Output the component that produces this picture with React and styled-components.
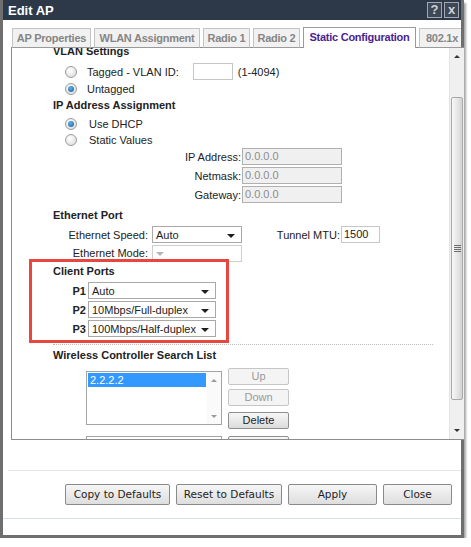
import React from "react";
import styled, { createGlobalStyle } from "styled-components";

const Global = createGlobalStyle`
  html, body { margin: 0; background: #fff; }
  body {
    font-family: "Liberation Sans", Arial, sans-serif;
    font-size: 11px;
    color: #222;
  }
  * { box-sizing: border-box; }
`;

const Window = styled.div`
  width: 464px;
  height: 538px;
  border: 3px solid #6f6f6f;
  border-top: 0;
  box-shadow: 2px 3px 2px rgba(0, 0, 0, 0.35);
  background: #fff;
  display: flex;
  flex-direction: column;
`;

const TitleBar = styled.div`
  height: 20px;
  background: #2d3949;
  display: flex;
  align-items: center;
  justify-content: space-between;
  padding: 0 2px 0 5px;
  flex-shrink: 0;
`;

const TitleText = styled.span`
  color: #fff;
  font-weight: bold;
  font-size: 13px;
`;

const TitleButtons = styled.div`
  display: flex;
  gap: 2px;
`;

const TitleButton = styled.div`
  width: 15px;
  height: 16px;
  border: 1px solid #a3a8ae;
  background: #3e4857;
  color: #cfd3d8;
  font-weight: bold;
  font-size: 13px;
  line-height: 14px;
  text-align: center;
`;

const Body = styled.div`
  padding: 7px 0 0 8px;
`;

const TabRow = styled.div`
  display: flex;
  gap: 3px;
  margin-left: 1px;
  height: 21px;
  overflow: hidden;
  position: relative;
  z-index: 1;
  margin-bottom: -1px;
  align-items: flex-end;
`;

const Tab = styled.div`
  flex-shrink: 0;
  width: ${(p) => p.$w}px;
  height: ${(p) => (p.$active ? 21 : 20)}px;
  border: 1px solid ${(p) => (p.$active ? "#9a9a9a" : "#c4c4c4")};
  border-bottom: ${(p) => (p.$active ? "0" : "1px solid #9a9a9a")};
  background: ${(p) => (p.$active ? "#fff" : "#f1f1f1")};
  color: ${(p) => (p.$active ? "#4b1e91" : "#858585")};
  font-weight: bold;
  letter-spacing: -0.25px;
  line-height: 19px;
  text-align: center;
  white-space: nowrap;
`;

const Panel = styled.div`
  width: 453px;
  height: 393px;
  border: 1px solid #8c8c8c;
  border-right: 0;
  display: flex;
  overflow: hidden;
`;

const Content = styled.div`
  flex: 1;
  overflow: hidden;
`;

const Inner = styled.div`
  margin-top: -5px;
`;

const Heading = styled.div`
  padding-left: 41px;
  height: 16px;
  line-height: 16px;
  font-weight: bold;
  margin-top: ${(p) => p.$mt || 0}px;
`;

const RadioRow = styled.div`
  display: flex;
  align-items: center;
  height: ${(p) => p.$h || 16}px;
  padding-left: 53px;
  margin-top: ${(p) => p.$mt || 0}px;
`;

const Radio = styled.span`
  width: 12px;
  height: 12px;
  border-radius: 50%;
  border: 1px solid #9c9c9c;
  background: radial-gradient(circle at 40% 35%, #ffffff, #d6d6d6);
  margin-right: ${(p) => p.$gap || 10}px;
  display: flex;
  align-items: center;
  justify-content: center;
  flex-shrink: 0;
  &::after {
    content: "";
    display: ${(p) => (p.$checked ? "block" : "none")};
    width: 6px;
    height: 6px;
    border-radius: 50%;
    background: radial-gradient(circle at 40% 35%, #5fb0ef, #1a5b98);
  }
`;

const Hint = styled.span`
  margin-left: 5px;
`;

const Row = styled.div`
  display: flex;
  align-items: center;
  height: ${(p) => p.$h || 19}px;
  margin-top: ${(p) => p.$mt || 0}px;
`;

const Label = styled.span`
  width: ${(p) => p.$w}px;
  text-align: right;
  padding-right: ${(p) => p.$pr || 1}px;
  font-weight: ${(p) => (p.$bold ? "bold" : "normal")};
  flex-shrink: 0;
  white-space: nowrap;
`;

const TextInput = styled.div`
  width: ${(p) => p.$w}px;
  height: 17px;
  border: 1px solid ${(p) => (p.$disabled ? "#b0b0b0" : "#c6c6c6")};
  background: ${(p) => (p.$disabled ? "#f0f0f0" : "#fff")};
  color: ${(p) => (p.$disabled ? "#8c8c8c" : "#222")};
  padding-left: 2px;
  line-height: 15px;
  margin-left: ${(p) => p.$ml || 0}px;
  flex-shrink: 0;
`;

const Select = styled.div`
  width: ${(p) => p.$w}px;
  height: 17px;
  border: 1px solid ${(p) => (p.$disabled ? "#cfcfcf" : "#a9a9a9")};
  background: #fff;
  display: flex;
  align-items: center;
  justify-content: space-between;
  padding: 0 6px 0 3px;
  flex-shrink: 0;
  &::after {
    content: "";
    border-left: 4px solid transparent;
    border-right: 4px solid transparent;
    border-top: 4px solid ${(p) => (p.$disabled ? "#b5b5b5" : "#1e1e1e")};
    margin-top: 2px;
  }
`;

const ClientSection = styled.div`
  position: relative;
`;

const RedBox = styled.div`
  position: absolute;
  left: 17px;
  top: -4px;
  width: 200px;
  height: 84px;
  border: 3px solid #e8473f;
  pointer-events: none;
`;

const Separator = styled.div`
  margin: 6px 0 0 41px;
  width: 380px;
  border-top: 1px dotted #bdbdbd;
`;

const ListArea = styled.div`
  display: flex;
  gap: 6px;
  padding-left: 74px;
  margin-top: ${(p) => p.$mt || 0}px;
`;

const ListBox = styled.div`
  width: 136px;
  height: ${(p) => p.$h || 54}px;
  margin-top: ${(p) => p.$mt || 0}px;
  border: 1px solid #a4a4a4;
  display: flex;
  flex-shrink: 0;
`;

const ListItems = styled.div`
  flex: 1;
  padding: 1px;
`;

const ListItem = styled.div`
  height: 14px;
  line-height: 14px;
  padding-left: 2px;
  background: ${(p) => (p.$selected ? "#3399ff" : "transparent")};
  color: ${(p) => (p.$selected ? "#fff" : "#222")};
`;

const ListScroll = styled.div`
  width: 14px;
  background: #fafafa;
  display: flex;
  flex-direction: column;
  justify-content: space-between;
  align-items: center;
  padding: 7px 0 6px;
`;

const Arrow = styled.span`
  border-left: 3px solid transparent;
  border-right: 3px solid transparent;
  ${(p) => (p.$up ? "border-bottom" : "border-top")}: 3px solid ${(p) => p.$c || "#9a9a9a"};
`;

const SideButtons = styled.div`
  display: flex;
  flex-direction: column;
`;

const SmallButton = styled.div`
  width: 61px;
  height: 17px;
  margin-top: ${(p) => p.$mt || 0}px;
  border: 1px solid ${(p) => (p.$disabled ? "#c6c6c6" : "#8f8f8f")};
  border-radius: 2px;
  background: ${(p) =>
    p.$disabled ? "#f4f4f4" : "linear-gradient(#f7f7f7, #dcdcdc)"};
  color: ${(p) => (p.$disabled ? "#9a9a9a" : "#1e1e1e")};
  text-align: center;
  line-height: 15px;
`;

const Scrollbar = styled.div`
  width: 15px;
  background: #f0f0f0;
  border-left: 1px solid #e4e4e4;
  display: flex;
  flex-direction: column;
  flex-shrink: 0;
`;

const ScrollArrow = styled.div`
  height: 17px;
  display: flex;
  align-items: center;
  justify-content: center;
`;

const Track = styled.div`
  flex: 1;
  padding-top: 32px;
`;

const Thumb = styled.div`
  height: 303px;
  margin: 0 1px;
  border: 1px solid #a9a9a9;
  border-radius: 2px;
  background: linear-gradient(90deg, #f8f8f8, #e4e4e4 60%, #d2d2d2);
  display: flex;
  align-items: center;
  justify-content: center;
`;

const Grip = styled.div`
  width: 7px;
  height: 7px;
  background: repeating-linear-gradient(#6d6d6d 0 1px, transparent 1px 2px);
`;

const Footer = styled.div`
  display: flex;
  flex-direction: column;
`;

const FooterLine = styled.div`
  height: 1px;
  background: ${(p) => p.$c};
  margin: ${(p) => p.$mt}px 0 0 ${(p) => p.$ml || 0}px;
`;

const ButtonRow = styled.div`
  display: flex;
  justify-content: flex-end;
  gap: 6px;
  padding-right: 9px;
  margin-top: 13px;
`;

const FooterButton = styled.div`
  width: ${(p) => p.$w}px;
  height: 21px;
  border: 1px solid #8a8a8a;
  border-radius: 2px;
  background: linear-gradient(#f6f6f6, #dedede);
  color: #1e1e1e;
  text-align: center;
  line-height: 19px;
  font-family: "DejaVu Sans", sans-serif;
  font-size: 10.5px;
`;

const tabs = [
  { label: "AP Properties", w: 79 },
  { label: "WLAN Assignment", w: 106 },
  { label: "Radio 1", w: 47 },
  { label: "Radio 2", w: 47 },
  { label: "Static Configuration", w: 113 },
  { label: "802.1x", w: 46 },
];

const App = () => {
  return (
    <>
      <Global />
      <Window>
        <TitleBar>
          <TitleText>Edit AP</TitleText>
          <TitleButtons>
            <TitleButton>?</TitleButton>
            <TitleButton>x</TitleButton>
          </TitleButtons>
        </TitleBar>
        <Body>
          <TabRow>
            {tabs.map((t) => (
              <Tab
                key={t.label}
                $w={t.w}
                $active={t.label === "Static Configuration"}
              >
                {t.label}
              </Tab>
            ))}
          </TabRow>
          <Panel>
            <Content>
              <Inner>
                <Heading>VLAN Settings</Heading>
                <RadioRow $h={19} $mt={3}>
                  <Radio />
                  <span>Tagged - VLAN ID:</span>
                  <TextInput $w={40} $ml={14} />
                  <Hint>(1-4094)</Hint>
                </RadioRow>
                <RadioRow>
                  <Radio $checked />
                  <span>Untagged</span>
                </RadioRow>
                <Heading>IP Address Assignment</Heading>
                <RadioRow $mt={3}>
                  <Radio $checked $gap={12} />
                  <span>Use DHCP</span>
                </RadioRow>
                <RadioRow>
                  <Radio $gap={12} />
                  <span>Static Values</span>
                </RadioRow>
                <Row $mt={-1}>
                  <Label $w={230}>IP Address:</Label>
                  <TextInput $w={100} $disabled>0.0.0.0</TextInput>
                </Row>
                <Row>
                  <Label $w={230}>Netmask:</Label>
                  <TextInput $w={100} $disabled>0.0.0.0</TextInput>
                </Row>
                <Row>
                  <Label $w={230}>Gateway:</Label>
                  <TextInput $w={100} $disabled>0.0.0.0</TextInput>
                </Row>
                <Heading $mt={3}>Ethernet Port</Heading>
                <Row $mt={2}>
                  <Label $w={140} $pr={4}>Ethernet Speed:</Label>
                  <Select $w={90}>Auto</Select>
                  <Label $w={99} $pr={1}>Tunnel MTU:</Label>
                  <TextInput $w={39}>1500</TextInput>
                </Row>
                <Row $h={18}>
                  <Label $w={140} $pr={4}>Ethernet Mode:</Label>
                  <Select $w={90} $disabled />
                </Row>
                <ClientSection>
                  <Heading $mt={1}>Client Ports</Heading>
                  <Row $mt={2}>
                    <Label $w={76} $pr={2} $bold>P1</Label>
                    <Select $w={128}>Auto</Select>
                  </Row>
                  <Row>
                    <Label $w={76} $pr={2} $bold>P2</Label>
                    <Select $w={128}>10Mbps/Full-duplex</Select>
                  </Row>
                  <Row>
                    <Label $w={76} $pr={2} $bold>P3</Label>
                    <Select $w={128}>100Mbps/Half-duplex</Select>
                  </Row>
                  <RedBox />
                </ClientSection>
                <Separator />
                <Heading $mt={2}>Wireless Controller Search List</Heading>
                <ListArea $mt={5}>
                  <ListBox $mt={3}>
                    <ListItems>
                      <ListItem $selected>2.2.2.2</ListItem>
                    </ListItems>
                    <ListScroll>
                      <Arrow $up />
                      <Arrow />
                    </ListScroll>
                  </ListBox>
                  <SideButtons>
                    <SmallButton $disabled>Up</SmallButton>
                    <SmallButton $disabled $mt={4}>Down</SmallButton>
                    <SmallButton $mt={6}>Delete</SmallButton>
                  </SideButtons>
                </ListArea>
                <ListArea $mt={7}>
                  <ListBox $h={20} />
                  <SideButtons>
                    <SmallButton />
                  </SideButtons>
                </ListArea>
              </Inner>
            </Content>
            <Scrollbar>
              <ScrollArrow>
                <Arrow $up $c="#333" />
              </ScrollArrow>
              <Track>
                <Thumb>
                  <Grip />
                </Thumb>
              </Track>
              <ScrollArrow>
                <Arrow $c="#333" />
              </ScrollArrow>
            </Scrollbar>
          </Panel>
        </Body>
        <Footer>
          <FooterLine $c="#e6e6e6" $mt={30} $ml={5} />
          <ButtonRow>
            <FooterButton $w={105}>Copy to Defaults</FooterButton>
            <FooterButton $w={106}>Reset to Defaults</FooterButton>
            <FooterButton $w={89}>Apply</FooterButton>
            <FooterButton $w={69}>Close</FooterButton>
          </ButtonRow>
          <FooterLine $c="#d8dee8" $mt={13} />
        </Footer>
      </Window>
    </>
  );
};

export default App;
